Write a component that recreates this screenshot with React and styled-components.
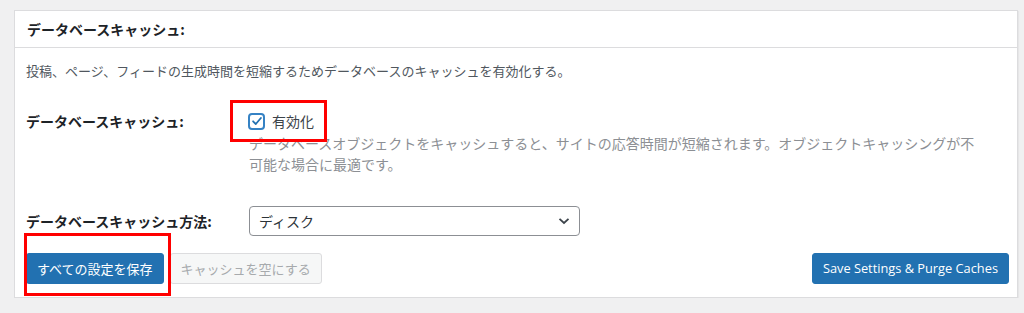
import React from "react";
import styled, { createGlobalStyle } from "styled-components";

const GlobalStyle = createGlobalStyle`
  html, body {
    margin: 0;
    padding: 0;
    background: #f0f0f1;
    font-family: "Noto Sans CJK JP", "Open Sans", sans-serif;
    color: #1d2327;
  }
`;

const Panel = styled.div`
  margin: 10px 0 0 14px;
  width: 1002px;
  background: #fff;
  border: 1px solid #dcdcde;
  box-shadow: 1px 1px 1px rgba(0, 0, 0, 0.04);
`;

const Header = styled.div`
  height: 36px;
  display: flex;
  align-items: center;
  padding: 0 12px;
  border-bottom: 1px solid #dcdcde;
`;

const Title = styled.h2`
  margin: 0;
  font-size: 14px;
  font-weight: 700;
  line-height: 20px;
  color: #1d2327;
`;

const Body = styled.div`
  padding: 13px 8px 13px 11px;
`;

const Intro = styled.p`
  margin: 0;
  font-size: 13px;
  line-height: 20px;
  color: #50575e;
`;

const Row = styled.div`
  display: grid;
  grid-template-columns: 223px 1fr;
  align-items: ${(p) => (p.$center ? "center" : "start")};
  margin-top: ${(p) => p.$top}px;
`;

const Label = styled.div`
  font-size: 14px;
  font-weight: 700;
  line-height: 20px;
  color: #1d2327;
`;

const Field = styled.div`
  display: flex;
  flex-direction: column;
  align-items: flex-start;
`;

const CheckLine = styled.label`
  position: relative;
  display: flex;
  align-items: center;
  gap: 7px;
  height: 20px;
  font-size: 14px;
  color: #3c434a;
`;

const Box = styled.span`
  width: 13px;
  height: 13px;
  margin-left: -1px;
  border: 2px solid #3582c4;
  border-radius: 4px;
  display: flex;
  align-items: center;
  justify-content: center;
  background: #fff;
`;

const Note = styled.p`
  margin: 2px 0 0;
  max-width: 736px;
  font-size: 14px;
  line-height: 21px;
  color: #8c8f94;
`;

const Marker = styled.span`
  position: absolute;
  left: ${(p) => p.$left}px;
  top: ${(p) => p.$top}px;
  width: ${(p) => p.$w}px;
  height: ${(p) => p.$h}px;
  border: 3px solid #f00;
  box-sizing: border-box;
  pointer-events: none;
`;

const Select = styled.div`
  width: 331px;
  height: 30px;
  box-sizing: border-box;
  border: 1px solid #8c8f94;
  border-radius: 4px;
  display: flex;
  align-items: center;
  justify-content: space-between;
  padding: 0 9px 0 9px;
  font-size: 14px;
  color: #2c3338;
`;

const Actions = styled.div`
  display: flex;
  align-items: center;
  gap: 6px;
  margin-top: 17px;
`;

const Anchor = styled.div`
  position: relative;
  display: flex;
`;

const Button = styled.button`
  height: 31px;
  padding: 0 10px;
  border-radius: 3px;
  font-family: ${(p) => (p.$latin ? '"Open Sans", "Noto Sans", sans-serif' : '"Noto Sans CJK JP", sans-serif')};
  font-size: ${(p) => (p.$latin ? "12.8px" : "13px")};
  line-height: 29px;
  cursor: pointer;
  white-space: nowrap;
  border: 1px solid ${(p) => (p.$primary ? "#2271b1" : "#dcdcde")};
  background: ${(p) => (p.$primary ? "#2271b1" : "#f6f7f7")};
  color: ${(p) => (p.$primary ? "#fff" : "#a7aaad")};
`;

const Spacer = styled.div`
  flex: 1;
`;

export default function App() {
  return (
    <>
      <GlobalStyle />
      <Panel>
        <Header>
          <Title>データベースキャッシュ:</Title>
        </Header>
        <Body>
          <Intro>投稿、ページ、フィードの生成時間を短縮するためデータベースのキャッシュを有効化する。</Intro>

          <Row $top={30}>
            <Label>データベースキャッシュ:</Label>
            <Field>
              <CheckLine>
                <Box>
                  <svg width="12" height="12" viewBox="0 0 20 20">
                    <path d="M3.5 10.5l4.5 4.5 8.5-10" fill="none" stroke="#2271b1" strokeWidth="3" strokeLinecap="round" strokeLinejoin="round" />
                  </svg>
                </Box>
                有効化
                <Marker $left={-19} $top={-11} $w={97} $h={42} />
              </CheckLine>
              <Note>
                データベースオブジェクトをキャッシュすると、サイトの応答時間が短縮されます。オブジェクトキャッシングが不可能な場合に最適です。
              </Note>
            </Field>
          </Row>

          <Row $top={31} $center>
            <Label>データベースキャッシュ方法:</Label>
            <Select>
              ディスク
              <svg width="12" height="8" viewBox="0 0 12 8">
                <path d="M1.5 1.8l4.5 4.2 4.5-4.2" fill="none" stroke="#3c434a" strokeWidth="1.8" />
              </svg>
            </Select>
          </Row>

          <Actions>
            <Anchor>
              <Button $primary>すべての設定を保存</Button>
              <Marker $left={-2} $top={-20} $w={147} $h={63} />
            </Anchor>
            <Button>キャッシュを空にする</Button>
            <Spacer />
            <Button $primary $latin>Save Settings &amp; Purge Caches</Button>
          </Actions>
        </Body>
      </Panel>
    </>
  );
}
